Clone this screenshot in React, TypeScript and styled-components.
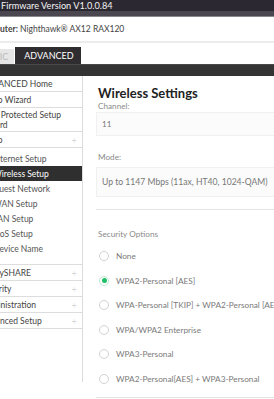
import React from "react";
import styled, { createGlobalStyle } from "styled-components";

const GlobalStyle = createGlobalStyle`
  html, body { margin: 0; padding: 0; background: #fff; overflow: hidden; }
  body { font-family: Lato, "Open Sans", sans-serif; }
  * { box-sizing: border-box; }
`;

const TopBar = styled.div`
  height: 11px;
  background: #2c2831;
  color: #f2f2f2;
  font-size: 9.2px;
  line-height: 11px;
  padding-left: 1px;
  white-space: nowrap;
`;

const Stripe = styled.div`
  height: 6px;
  background: #4b4750;
  border-bottom: 1px solid #8a878d;
`;

const Shifted = styled.div`
  margin-left: -23px;
  width: 297px;
`;

const RouterRow = styled.div`
  height: 24px;
  display: flex;
  align-items: center;
  padding-left: 13px;
  font-size: 8.5px;
  color: #444;
  white-space: nowrap;
  b { font-weight: 700; }
`;

const Separator = styled.div`
  height: 2px;
  background: #ececec;
`;

const TabRow = styled.div`
  height: 21px;
  display: flex;
  align-items: flex-end;
  gap: 1px;
  padding-left: 3px;
`;

const Tab = styled.div<{ $active?: boolean }>`
  height: ${(p) => (p.$active ? 17 : 15)}px;
  background: ${(p) => (p.$active ? "#2f2d30" : "#e6e6e6")};
  color: ${(p) => (p.$active ? "#fff" : "#bbb")};
  font-size: 9px;
  display: flex;
  align-items: center;
  padding: 0 ${(p) => (p.$active ? 7 : 6)}px 0 ${(p) => (p.$active ? 9 : 3)}px;
  white-space: nowrap;
`;

const DarkBar = styled.div`
  height: 12px;
  background: #343434;
  border-top: 1px solid #4a4a4a;
`;

const Body = styled.div`
  display: flex;
  align-items: flex-start;
`;

const Sidebar = styled.div`
  width: 106px;
  flex: none;
  min-height: 306px;
  border-right: 1px solid #dcdcdc;
`;

const NavItem = styled.div<{ $tall?: boolean }>`
  height: ${(p) => (p.$tall ? 24 : 16)}px;
  border-bottom: 1px solid #dddddd;
  display: flex;
  align-items: center;
  justify-content: space-between;
  padding: 0 5px 0 4px;
  font-size: 8.5px;
  line-height: 10px;
  color: #444;
  white-space: nowrap;
`;

const NavText = styled.span<{ $wrap?: boolean }>`
  white-space: ${(p) => (p.$wrap ? "normal" : "nowrap")};
  width: ${(p) => (p.$wrap ? "94px" : "auto")};
`;

const Plus = styled.span`
  color: #c4c4c4;
  font-size: 10px;
  font-weight: 300;
`;

const SubList = styled.div`
  padding: 3px 0 8px;
  border-bottom: 1px solid #dddddd;
`;

const SubItem = styled.div<{ $active?: boolean }>`
  height: 15px;
  display: flex;
  align-items: center;
  padding-left: 16px;
  font-size: 8.5px;
  color: ${(p) => (p.$active ? "#fff" : "#555")};
  background: ${(p) => (p.$active ? "#2f2f2f" : "transparent")};
  white-space: nowrap;
`;

const Main = styled.main`
  flex: 1;
  min-width: 0;
  overflow: hidden;
  padding: 9px 0 0 13px;
`;

const Title = styled.h1`
  margin: 0 0 0 2px;
  font-size: 13px;
  line-height: 16px;
  font-weight: 700;
  color: #222;
  white-space: nowrap;
`;

const Label = styled.div<{ $top?: number }>`
  margin: ${(p) => p.$top ?? 0}px 0 0 2px;
  font-size: 8.2px;
  line-height: 10px;
  color: #8a8a8a;
  white-space: nowrap;
`;

const Field = styled.div<{ $h: number; $top?: number; $size?: number }>`
  margin-top: ${(p) => p.$top ?? 1}px;
  height: ${(p) => p.$h}px;
  width: 260px;
  background: #fbfbfb;
  border: 1px solid #f0f0f0;
  display: flex;
  align-items: center;
  padding-left: 5px;
  font-size: ${(p) => p.$size ?? 8}px;
  color: #777;
  white-space: nowrap;
`;

const Divider = styled.div<{ $top: number }>`
  margin-top: ${(p) => p.$top}px;
  height: 1px;
  width: 260px;
  background: #e4e4e4;
`;

const RadioList = styled.div`
  margin-top: 5px;
`;

const RadioRow = styled.div`
  height: 24.5px;
  display: flex;
  align-items: center;
  gap: 7px;
  padding-left: 3px;
  font-size: 8.25px;
  color: #7a7a7a;
  white-space: nowrap;
`;

const RadioDot = styled.span<{ $checked?: boolean }>`
  width: 10px;
  height: 10px;
  flex: none;
  border-radius: 50%;
  border: 1px solid ${(p) => (p.$checked ? "#bfeccf" : "#d2d2d2")};
  display: flex;
  align-items: center;
  justify-content: center;
  &::after {
    content: "";
    width: 5px;
    height: 5px;
    border-radius: 50%;
    background: ${(p) => (p.$checked ? "#1fbf68" : "transparent")};
  }
`;

const topNav = [
  { label: "ADVANCED Home" },
  { label: "Setup Wizard" },
  { label: "WiFi Protected Setup Wizard", tall: true },
  { label: "Setup", plus: true },
];

const subNav = [
  "Internet Setup",
  "Wireless Setup",
  "Guest Network",
  "WAN Setup",
  "LAN Setup",
  "QoS Setup",
  "Device Name",
];

const bottomNav = ["ReadySHARE", "Security", "Administration", "Advanced Setup"];

const options = [
  "None",
  "WPA2-Personal [AES]",
  "WPA-Personal [TKIP] + WPA2-Personal [AES]",
  "WPA/WPA2 Enterprise",
  "WPA3-Personal",
  "WPA2-Personal[AES] + WPA3-Personal",
];

export default function App() {
  return (
    <>
      <GlobalStyle />
      <TopBar>Firmware Version V1.0.0.84</TopBar>
      <Stripe />
      <Shifted>
        <RouterRow>
          <b>Router:</b>&nbsp;Nighthawk® AX12 RAX120
        </RouterRow>
        <Separator />
        <TabRow>
          <Tab>BASIC</Tab>
          <Tab $active>ADVANCED</Tab>
        </TabRow>
        <DarkBar />
        <Body>
          <Sidebar>
            {topNav.map((n) => (
              <NavItem key={n.label} $tall={n.tall}>
                <NavText $wrap={n.tall}>{n.label}</NavText>
                {n.plus && <Plus>+</Plus>}
              </NavItem>
            ))}
            <SubList>
              {subNav.map((s) => (
                <SubItem key={s} $active={s === "Wireless Setup"}>
                  {s}
                </SubItem>
              ))}
            </SubList>
            {bottomNav.map((b) => (
              <NavItem key={b}>
                <NavText>{b}</NavText>
                <Plus>+</Plus>
              </NavItem>
            ))}
          </Sidebar>
          <Main>
            <Title>Wireless Settings</Title>
            <Label>Channel:</Label>
            <Field $h={24}>11</Field>
            <Label $top={16}>Mode:</Label>
            <Field $h={30} $top={5} $size={8.6}>
              Up to 1147 Mbps (11ax, HT40, 1024-QAM)
            </Field>
            <Divider $top={12} />
            <Label $top={19}>Security Options</Label>
            <RadioList>
              {options.map((o, i) => (
                <RadioRow key={o}>
                  <RadioDot $checked={i === 1} />
                  {o}
                </RadioRow>
              ))}
            </RadioList>
            <Divider $top={6} />
          </Main>
        </Body>
      </Shifted>
    </>
  );
}
